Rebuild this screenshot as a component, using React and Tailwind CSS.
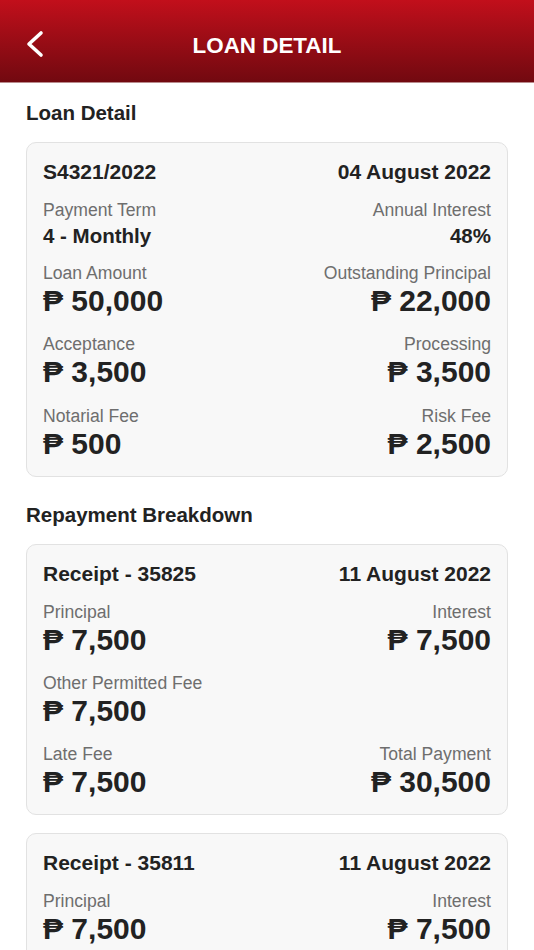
import React from "react";

function Cell({ label, value, right, money = true, small = false }) {
  return (
    <div className={`flex flex-col ${right ? "items-end text-right" : "items-start"}`}>
      <div className="text-[17.6px] leading-[20px] text-[#6e6e6e]">{label}</div>
      {small ? (
        <div className="mt-[4px] text-[20.5px] leading-[24px] font-bold text-[#222]">{value}</div>
      ) : (
        <div className="text-[30px] leading-[36px] font-bold text-[#222] whitespace-nowrap">
          {money ? <>₱ {value}</> : value}
        </div>
      )}
    </div>
  );
}

function Row({ children, className = "mt-[14px]" }) {
  return <div className={`${className} flex justify-between`}>{children}</div>;
}

function Card({ title, date, children }) {
  return (
    <div className="mx-[26px] rounded-[10px] border border-[#e2e2e2] bg-[#f8f8f8] px-4 pt-[17px] pb-[14px]">
      <div className="flex justify-between text-[21px] leading-[24px] font-bold text-[#222]">
        <span>{title}</span>
        <span>{date}</span>
      </div>
      {children}
    </div>
  );
}

function Receipt({ no, date }) {
  return (
    <Card title={`Receipt - ${no}`} date={date}>
      <Row className="mt-[16px]">
        <Cell label="Principal" value="7,500" />
        <Cell label="Interest" value="7,500" right />
      </Row>
      <Row className="mt-[15px]">
        <Cell label="Other Permitted Fee" value="7,500" />
      </Row>
      <Row className="mt-[15px]">
        <Cell label="Late Fee" value="7,500" />
        <Cell label="Total Payment" value="30,500" right />
      </Row>
    </Card>
  );
}

export default function App() {
  return (
    <div
      className="min-h-screen bg-white"
      style={{ fontFamily: '"Liberation Sans", Arial, "DejaVu Sans", sans-serif' }}
    >
      <header className="relative flex h-[83px] items-center justify-center bg-gradient-to-b from-[#c20f1b] to-[#720910] border-b border-[#b98a8c]">
        <svg
          className="absolute left-[24px] top-[30px]"
          width="22"
          height="28"
          viewBox="0 0 22 28"
          fill="none"
        >
          <path d="M17 3 L5 14 L17 25" stroke="white" strokeWidth="3.6" strokeLinecap="round" strokeLinejoin="round" />
        </svg>
        <h1 className="mt-[9px] text-[22.4px] font-bold text-white">LOAN DETAIL</h1>
      </header>

      <h2 className="mx-[26px] mt-[18px] mb-[17px] text-[20.5px] leading-[24px] font-bold text-[#222]">Loan Detail</h2>
      <Card title="S4321/2022" date="04 August 2022">
        <Row className="mt-[16px]">
          <Cell label="Payment Term" value="4 - Monthly" small />
          <Cell label="Annual Interest" value="48%" small right />
        </Row>
        <Row className="mt-[15px]">
          <Cell label="Loan Amount" value="50,000" />
          <Cell label="Outstanding Principal" value="22,000" right />
        </Row>
        <Row className="mt-[15px]">
          <Cell label="Acceptance" value="3,500" />
          <Cell label="Processing" value="3,500" right />
        </Row>
        <Row className="mt-[16px]">
          <Cell label="Notarial Fee" value="500" />
          <Cell label="Risk Fee" value="2,500" right />
        </Row>
      </Card>

      <h2 className="mx-[26px] mt-[26px] mb-[17px] text-[20.5px] leading-[24px] font-bold text-[#222]">Repayment Breakdown</h2>
      <div className="flex flex-col gap-[18px] pb-6">
        <Receipt no="35825" date="11 August 2022" />
        <Receipt no="35811" date="11 August 2022" />
      </div>
    </div>
  );
}
